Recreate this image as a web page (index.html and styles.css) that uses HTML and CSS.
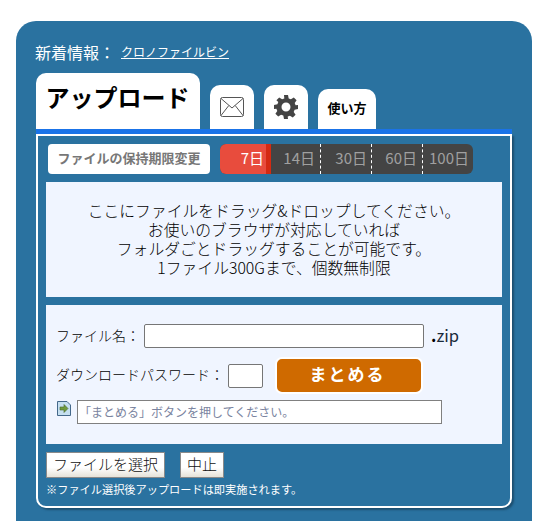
FILE: index.html
```html
<!DOCTYPE html>
<html lang="ja">
<head>
<meta charset="utf-8">
<title>アップロード</title>
<link rel="stylesheet" href="styles.css">
</head>
<body>
<div class="shell">
  <div class="news"><span class="news-label">新着情報：</span><a class="news-link" href="#">クロノファイルビン</a></div>
  <div class="tabs">
    <div class="tab tab-main">アップロード</div>
    <div class="tab tab-icon">
      <svg width="26" height="22" viewBox="0 0 26 22"><rect x="1.500" y="1.500" width="23" height="19" rx="2" fill="#fff" stroke="#555" stroke-width="1"/><path d="M2 2.500 L13 12 L24 2.500 M2 19.500 L9.800 9.500 M24 19.500 L16.200 9.500" fill="none" stroke="#555" stroke-width="1"/></svg>
    </div>
    <div class="tab tab-icon">
      <svg width="24" height="24" viewBox="0 0 24 24"><path fill="#444" fill-rule="evenodd" d="M10 0h4l.7 3.400 2.200.9L19.800 2.400l2.800 2.800-1.900 2.900.9 2.200L24 10v4l-3.400.7-.9 2.200 1.900 2.900-2.800 2.800-2.900-1.900-2.200.9L14 24h-4l-.7-3.400-2.200-.9-2.900 1.900-2.800-2.800 1.900-2.900-.9-2.200L0 14v-4l3.400-.7.9-2.200L2.400 5.200l2.800-2.800 2.900 1.900 2.200-.9zM12 7.500a4.500 4.500 0 1 0 0 9 4.500 4.500 0 0 0 0-9z"/></svg>
    </div>
    <div class="tab tab-help">使い方</div>
  </div>
  <div class="panel">
    <div class="panel-body">
      <div class="retention">
        <div class="retention-label">ファイルの保持期限変更</div>
        <div class="retention-bar">
          <div class="seg seg-active">7日</div>
          <div class="seg seg-14">14日</div>
          <div class="seg seg-30">30日</div>
          <div class="seg seg-60">60日</div>
          <div class="seg seg-100">100日</div>
        </div>
      </div>
      <div class="drop">
        <p>ここにファイルをドラッグ&amp;ドロップしてください。</p>
        <p>お使いのブラウザが対応していれば</p>
        <p>フォルダごとドラッグすることが可能です。</p>
        <p>1ファイル300Gまで、個数無制限</p>
      </div>
      <div class="form">
        <div class="row-name">
          <label class="field-label">ファイル名：</label>
          <input class="input input-name" type="text">
          <span class="ext"><b class="dot">.</b>zip</span>
        </div>
        <div class="row-pass">
          <label class="field-label">ダウンロードパスワード：</label>
          <input class="input input-pass" type="text">
          <button class="bundle" type="button">まとめる</button>
        </div>
        <div class="row-status">
          <svg class="status-icon" width="14" height="15" viewBox="0 0 14 15"><path d="M.5 .5h9.500l3.500 3.500v10.500H.5z" fill="#c5dff0" stroke="#44688a"/><path d="M3 6h4V3.500L11 7.500l-4 4V9H3z" fill="#6f9a3c" stroke="#47682a" stroke-width=".6"/></svg>
          <div class="status">「まとめる」ボタンを押してください。</div>
        </div>
      </div>
      <div class="actions">
        <button class="btn btn-select" type="button">ファイルを選択</button>
        <button class="btn btn-stop" type="button">中止</button>
      </div>
      <p class="note">※ファイル選択後アップロードは即実施されます。</p>
    </div>
  </div>
</div>
</body>
</html>
```

FILE: styles.css
```css
* { box-sizing: border-box; }
html, body { height: 100%; }
body {
  margin: 0;
  padding: 21px 17px 0 16px;
  background: #fff;
  overflow: hidden;
  font-family: "Noto Sans CJK JP", "Noto Sans", sans-serif;
  color: #111;
}
.shell {
  height: 500px;
  padding: 21px 20px 0;
  background: #2a72a0;
  border-radius: 20px 20px 0 0;
}
.news {
  display: flex;
  align-items: center;
  height: 20px;
  margin-left: -1px;
  color: #fff;
  font-size: 16px;
  line-height: 20px;
}
.news-label { width: 86px; }
.news-link {
  color: #fff;
  font-size: 12px;
  text-decoration: underline;
}
.tabs {
  display: flex;
  align-items: flex-end;
  height: 56px;
  margin-top: 11px;
}
.tab {
  display: flex;
  align-items: center;
  justify-content: center;
  background: #fff;
  border-radius: 10px 10px 0 0;
  color: #000;
}
.tab-main {
  width: 164px;
  height: 56px;
  padding: 0 1px 8px 0;
  font-size: 24px;
  font-weight: 700;
  line-height: 30px;
}
.tab-icon {
  width: 44px;
  height: 44px;
  margin-left: 10px;
}
.tab-help {
  width: 58px;
  height: 40px;
  margin-left: 10px;
  padding-bottom: 3px;
  font-size: 13px;
  font-weight: 700;
}
.panel {
  width: 476px;
  height: 379px;
  border-top: 5px solid #1a73e8;
}
.panel-body {
  height: 374px;
  padding: 8px 8px 0;
  border: 2px solid #fff;
  border-radius: 0 0 10px 10px;
  box-shadow: 2px 2px 2px #1d4f70;
}
.retention {
  display: flex;
  gap: 10px;
  height: 30px;
  margin-left: 2px;
}
.retention-label {
  width: 162px;
  border-radius: 4px;
  background: #fff;
  color: #777;
  font-size: 13px;
  font-weight: 700;
  line-height: 28px;
  text-align: center;
}
.retention-bar {
  display: flex;
  width: 253px;
  overflow: hidden;
  border-radius: 6px;
  background: #444;
  color: #a0a0a0;
  font-size: 15px;
  line-height: 28px;
}
.seg { text-align: right; }
.seg-active {
  width: 51px;
  padding-right: 2px;
  border-right: 5px solid #d42a12;
  background: #e84c3d;
  color: #fff;
}
.seg-14 { width: 50px; padding-right: 5px; border-right: 1px dashed #fff; }
.seg-30 { width: 51px; padding-right: 4px; border-right: 1px dashed #fff; }
.seg-60 { width: 51px; padding-right: 5px; border-right: 1px dashed #fff; }
.seg-100 { width: 50px; padding-right: 4px; }
.drop {
  height: 115px;
  margin-top: 8px;
  padding-top: 19px;
  background: #f0f5ff;
  font-size: 15.8px;
  font-weight: 300;
  color: #000;
  line-height: 19px;
  text-align: center;
}
.drop p { margin: 0; }
.form {
  height: 139px;
  margin-top: 8px;
  padding: 19px 0 0 10px;
  background: #f0f5ff;
  color: #000;
  font-size: 14px;
  font-weight: 300;
}
.row-name, .row-pass, .row-status { display: flex; align-items: center; }
.row-name { height: 24px; }
.field-label { padding-bottom: 3px; white-space: nowrap; }
.row-name .field-label { width: 88px; }
.row-pass .field-label { width: 172px; }
.input {
  height: 24px;
  padding: 0 3px;
  border: 1px solid #767676;
  border-radius: 2px;
  background: #fff;
}
.input-name { width: 280px; }
.ext { margin-left: 7px; padding-bottom: 3px; font-size: 16.5px; font-weight: 400; color: #1a2a3a; }
.dot { font-weight: 700; color: #000; }
.row-pass { height: 37px; margin-top: 9px; }
.input-pass { width: 35px; }
.bundle {
  width: 148px;
  height: 37px;
  margin-left: 12px;
  padding: 0 3px 4px 0;
  border: 2px solid #fff;
  border-radius: 7px;
  background: #cf6a00;
  color: #fff;
  font-family: inherit;
  font-size: 17px;
  font-weight: 700;
  letter-spacing: 2px;
}
.row-status { align-items: flex-start; margin: 6px 0 0 1px; }
.status-icon { margin-top: 1px; }
.status {
  width: 365px;
  height: 24px;
  margin-left: 6px;
  padding-left: 1px;
  border: 1px solid #808080;
  background: #fff;
  color: #7a84a0;
  font-size: 12px;
  font-weight: 400;
  line-height: 22px;
}
.actions { display: flex; gap: 15px; margin-top: 8px; }
.btn {
  height: 26px;
  padding: 0 0 3px;
  border: 1px solid #8a8a8a;
  background: linear-gradient(#fff 60%, #e6e2d8);
  color: #111;
  font-family: inherit;
  font-size: 15px;
  font-weight: 300;
  line-height: 20px;
}
.btn-select { width: 119px; }
.btn-stop { width: 44px; }
.note {
  margin: 3px 0 0;
  color: #fff;
  font-size: 11.2px;
  line-height: 16px;
}
```
